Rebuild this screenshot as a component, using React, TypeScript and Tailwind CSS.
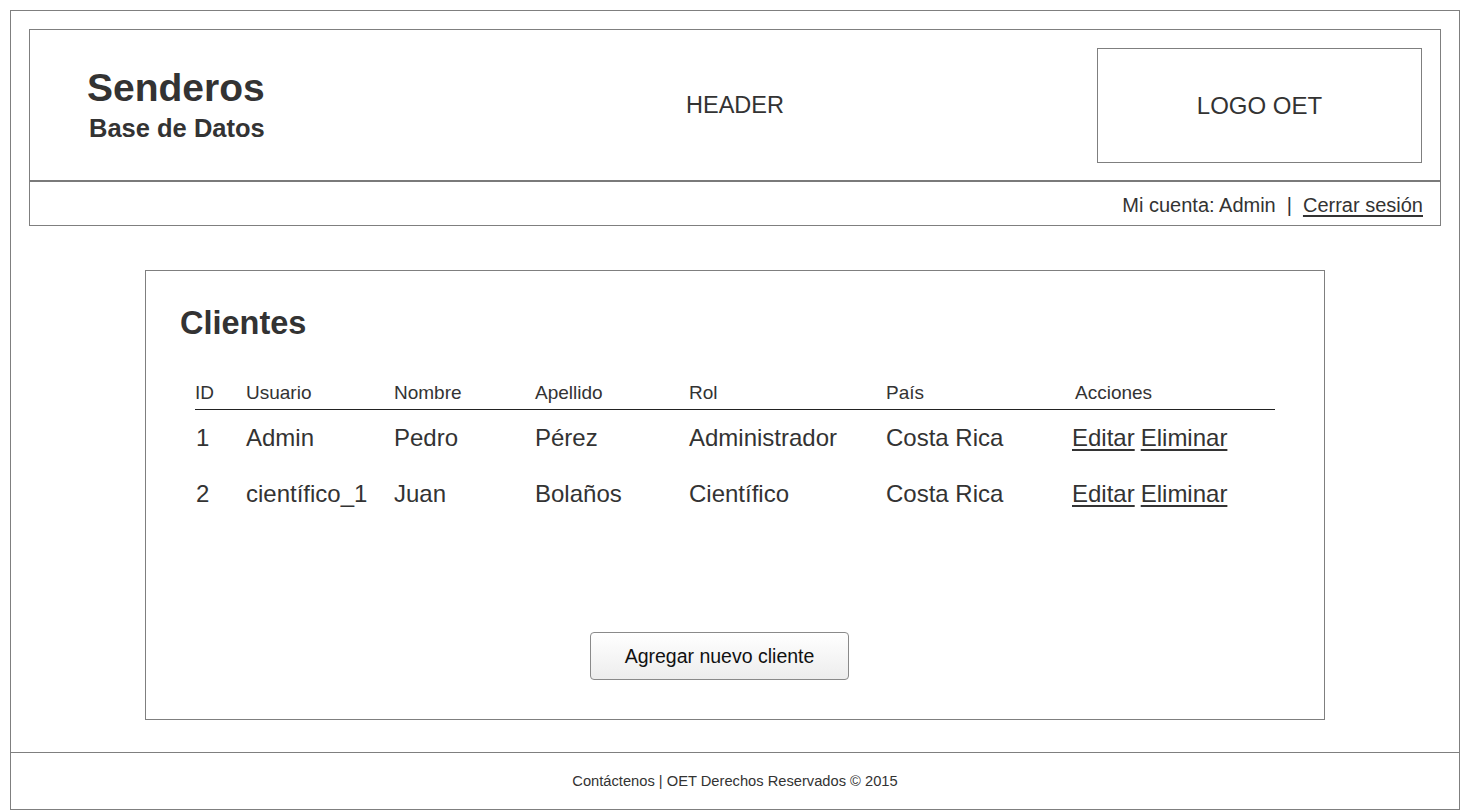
const rows = [
  { id: "1", user: "Admin", name: "Pedro", last: "Pérez", role: "Administrador", country: "Costa Rica" },
  { id: "2", user: "científico_1", name: "Juan", last: "Bolaños", role: "Científico", country: "Costa Rica" },
];

const cols = "grid grid-cols-[51px_148px_141px_154px_197px_186px_1fr]";

function Header() {
  return (
    <header className="border border-[#7f7f7f]">
      <div className="grid grid-cols-[1fr_auto_1fr] items-center border-b-2 border-[#7a7a7a] pb-[17px] pt-[18px]">
        <div className="flex flex-col items-start pl-[57px] font-bold text-[#333]">
          <span className="text-[39px] leading-[40px]">Senderos</span>
          <span className="mt-[5px] pl-[2px] text-[25.5px] leading-[30px]">Base de Datos</span>
        </div>
        <div className="text-[23.5px] text-[#333]">HEADER</div>
        <div className="flex justify-end pr-[18px]">
          <div className="flex h-[115px] w-[325px] items-center justify-center border border-[#7f7f7f] text-[24px] text-[#333]">
            LOGO OET
          </div>
        </div>
      </div>
      <div className="flex h-[43px] items-center justify-end pr-[17px] pt-[3px] text-[20px] text-[#333]">
        <span>Mi cuenta: Admin</span>
        <span className="mx-[11px]">|</span>
        <a className="underline underline-offset-[3px]" href="#">
          Cerrar sesión
        </a>
      </div>
    </header>
  );
}

function ClientTable() {
  return (
    <div className="px-[49px]">
      <div className={`${cols} h-[37px] items-center border-b border-[#222] pt-[3px] text-[19px] leading-[34px] text-[#333]`}>
        <span>ID</span>
        <span>Usuario</span>
        <span>Nombre</span>
        <span>Apellido</span>
        <span>Rol</span>
        <span>País</span>
        <span className="pl-[3px]">Acciones</span>
      </div>
      {rows.map((r) => (
        <div key={r.id} className={`${cols} h-[56px] items-center text-[24px] text-[#333]`}>
          <span className="pl-[1px]">{r.id}</span>
          <span>{r.user}</span>
          <span>{r.name}</span>
          <span>{r.last}</span>
          <span>{r.role}</span>
          <span>{r.country}</span>
          <span className="flex gap-[6px]">
            <a className="underline underline-offset-[3px]" href="#">Editar</a>
            <a className="underline underline-offset-[3px]" href="#">Eliminar</a>
          </span>
        </div>
      ))}
    </div>
  );
}

export default function App() {
  return (
    <div className="min-h-screen bg-white pl-[10px] pt-[10px] font-['Liberation_Sans',Arial,sans-serif]">
      <div className="flex flex-col border border-[#7f7f7f] pt-[18px]">
        <div className="px-[18px]">
          <Header />
        </div>

        <section className="mx-auto mt-[44px] w-[1180px] border border-[#7f7f7f] pb-[39px] pt-[34px]">
          <h2 className="pl-[34px] text-[32.5px] font-bold leading-[36px] text-[#333]">Clientes</h2>
          <div className="mt-[32px]">
            <ClientTable />
          </div>
          <div className="mt-[110px] flex justify-center pr-[31px]">
            <button
              type="button"
              className="h-[48px] w-[259px] rounded-[4px] border border-[#8a8a8a] bg-gradient-to-b from-white to-[#ededed] pt-[2px] text-[19.5px] text-[#111]"
            >
              Agregar nuevo cliente
            </button>
          </div>
        </section>

        <footer className="mt-[32px] flex h-[57px] items-center justify-center border-t border-[#7f7f7f] pt-[1px] text-[14.7px] text-[#333]">
          Contáctenos | OET Derechos Reservados © 2015
        </footer>
      </div>
    </div>
  );
}
